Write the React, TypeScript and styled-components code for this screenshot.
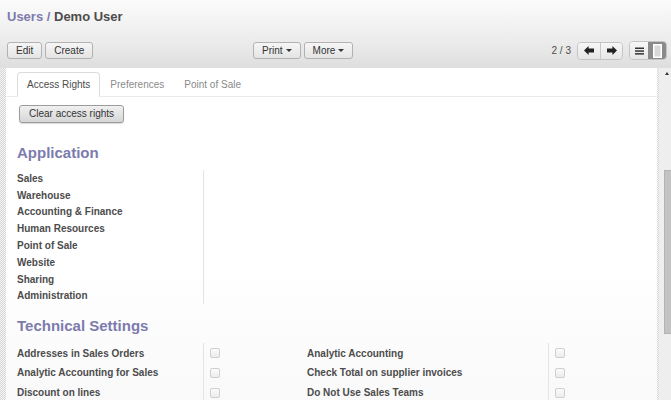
import React from "react";
import styled, { createGlobalStyle } from "styled-components";

const Global = createGlobalStyle`
  html, body { margin: 0; padding: 0; }
  body {
    width: 671px;
    height: 400px;
    overflow: hidden;
    background: #ffffff;
    font-family: "Liberation Sans", Arial, sans-serif;
  }
`;

const Page = styled.div`
  width: 671px;
  height: 400px;
  display: flex;
  flex-direction: column;
  overflow: hidden;
`;

const Header = styled.header`
  height: 68px;
  box-sizing: border-box;
  padding: 9px 4px 0 7px;
  background: linear-gradient(to bottom, #fbfbfb 0%, #ececec 60%, #dedede 100%);
  flex-shrink: 0;
`;

const Title = styled.h1`
  margin: 0;
  font-size: 13px;
  line-height: 16px;
  font-weight: bold;
  color: #4c4c4c;
`;

const Crumb = styled.span`
  color: #7c7bad;
`;

const Toolbar = styled.div`
  margin-top: 16px;
  display: grid;
  grid-template-columns: 246px 1fr auto;
  align-items: center;
`;

const Group = styled.div`
  display: flex;
  gap: 3px;
  align-items: center;
`;

const Btn = styled.button`
  height: 17px;
  box-sizing: border-box;
  padding: 0 8px;
  border: 1px solid #b2b2b2;
  border-radius: 3px;
  background: linear-gradient(to bottom, #f6f6f6, #e4e4e4);
  font-family: "Liberation Sans", Arial, sans-serif;
  font-size: 10px;
  line-height: 15px;
  color: #333;
  display: flex;
  align-items: center;
  gap: 3px;
  cursor: pointer;
`;

const Caret = styled.span`
  width: 0;
  height: 0;
  border-left: 3px solid transparent;
  border-right: 3px solid transparent;
  border-top: 3px solid #333;
`;

const Right = styled.div`
  display: flex;
  align-items: center;
`;

const PagerText = styled.span`
  font-size: 10px;
  color: #4c4c4c;
  margin-right: 6px;
`;

const BtnGroup = styled.div<{ $gap?: number; $h: number }>`
  display: flex;
  border: 1px solid #c4c4c4;
  border-radius: 4px;
  overflow: hidden;
  height: ${(p) => p.$h}px;
  box-sizing: border-box;
  margin-right: ${(p) => p.$gap ?? 0}px;
`;

const GroupBtn = styled.div<{ $w: number; $active?: boolean; $divider?: boolean }>`
  width: ${(p) => p.$w}px;
  display: flex;
  align-items: center;
  justify-content: center;
  background: ${(p) =>
    p.$active ? "#8a8a8a" : "linear-gradient(to bottom, #f7f7f7, #e6e6e6)"};
  border-left: ${(p) => (p.$divider ? "1px solid #c8c8c8" : "none")};
`;

const Body = styled.div`
  flex: 1;
  display: flex;
  min-height: 0;
`;

const Hatch = styled.div<{ $w: number }>`
  width: ${(p) => p.$w}px;
  flex-shrink: 0;
  background: repeating-conic-gradient(#d6d6d6 0 25%, #f5f5f5 0 50%) 0 0 / 2px 2px;
`;

const Sheet = styled.div`
  flex: 1;
  min-width: 0;
  box-sizing: border-box;
  padding: 0 0 0 11px;
  background: linear-gradient(to bottom, #ffffff 0%, #ffffff 60%, #f9f9f9 100%);
`;

const Tabs = styled.div`
  margin-top: 4px;
  margin-left: -11px;
  padding-left: 11px;
  display: flex;
  border-bottom: 1px solid #ebebeb;
  height: 24px;
`;

const Tab = styled.div<{ $active?: boolean }>`
  box-sizing: border-box;
  height: 25px;
  padding: 4px 9px 0 9px;
  font-size: 10px;
  line-height: 15px;
  color: ${(p) => (p.$active ? "#4c4c4c" : "#8a8a8a")};
  border: 1px solid ${(p) => (p.$active ? "#dcdcdc" : "transparent")};
  border-bottom-color: ${(p) => (p.$active ? "#ffffff" : "transparent")};
  border-radius: 4px 4px 0 0;
  background: ${(p) => (p.$active ? "#ffffff" : "transparent")};
`;

const ClearBtn = styled.button`
  margin: 8px 0 0 2px;
  height: 18px;
  box-sizing: border-box;
  padding: 0 9px;
  border: 1px solid #9c9c9c;
  border-radius: 3px;
  background: linear-gradient(to bottom, #f0f0f0, #d6d6d6);
  box-shadow: 0 1px 1px rgba(0, 0, 0, 0.15);
  font-family: "Liberation Sans", Arial, sans-serif;
  font-size: 10px;
  line-height: 16px;
  color: #333;
  display: block;
`;

const Heading = styled.h2<{ $top: number }>`
  margin: ${(p) => p.$top}px 0 8px 0;
  font-size: 15px;
  line-height: 18px;
  font-weight: bold;
  color: #7c7bad;
`;

const Grid = styled.div<{ $cols: string; $row: number }>`
  display: grid;
  grid-template-columns: ${(p) => p.$cols};
  grid-auto-rows: ${(p) => p.$row}px;
  width: 629px;
`;

const Label = styled.div`
  font-size: 10px;
  font-weight: bold;
  color: #4c4c4c;
  display: flex;
  align-items: center;
  white-space: nowrap;
`;

const Field = styled.div`
  border-left: 1px solid #e4e4e4;
  display: flex;
  align-items: center;
  padding-left: 6px;
`;

const Check = styled.span`
  width: 10px;
  height: 10px;
  box-sizing: border-box;
  border: 1px solid #cfcfcf;
  border-radius: 2px;
  background: linear-gradient(to bottom, #fbfbfb, #ececec);
`;

const Scroll = styled.div`
  width: 14px;
  flex-shrink: 0;
  display: flex;
`;

const Track = styled.div`
  flex: 1;
  background: #eeeeee;
  display: flex;
  flex-direction: column;
  align-items: flex-start;
`;

const UpArrow = styled.span`
  margin: 4px 0 0 6px;
  width: 0;
  height: 0;
  border-left: 2.5px solid transparent;
  border-right: 2.5px solid transparent;
  border-bottom: 3px solid #333;
`;

const Thumb = styled.div`
  margin: 95px 0 0 5px;
  width: 7px;
  height: 164px;
  background: #c3c3c3;
  border: 1px solid #b4b4b4;
  border-right: none;
  box-sizing: border-box;
`;

const apps = [
  "Sales",
  "Warehouse",
  "Accounting & Finance",
  "Human Resources",
  "Point of Sale",
  "Website",
  "Sharing",
  "Administration",
];

const tech: [string, string][] = [
  ["Addresses in Sales Orders", "Analytic Accounting"],
  ["Analytic Accounting for Sales", "Check Total on supplier invoices"],
  ["Discount on lines", "Do Not Use Sales Teams"],
];

const ArrowLeft = () => (
  <svg width="10" height="9" viewBox="0 0 10 9">
    <path d="M0 4.5 L4.6 0 L4.6 2.4 L10 2.4 L10 6.6 L4.6 6.6 L4.6 9 Z" fill="#222" />
  </svg>
);

const ArrowRight = () => (
  <svg width="10" height="9" viewBox="0 0 10 9">
    <path d="M10 4.5 L5.4 0 L5.4 2.4 L0 2.4 L0 6.6 L5.4 6.6 L5.4 9 Z" fill="#222" />
  </svg>
);

const ListIcon = () => (
  <svg width="9" height="8" viewBox="0 0 9 8">
    <rect x="0" y="0.5" width="9" height="1.5" fill="#333" />
    <rect x="0" y="3.3" width="9" height="1.5" fill="#333" />
    <rect x="0" y="6.1" width="9" height="1.5" fill="#333" />
  </svg>
);

const FormIcon = () => (
  <svg width="9" height="14" viewBox="0 0 9 14">
    <rect x="0.75" y="0.75" width="7.5" height="12.5" fill="#d8d8d8" stroke="#ffffff" strokeWidth="1.5" />
  </svg>
);

export default function App() {
  return (
    <>
      <Global />
      <Page>
        <Header>
          <Title>
            <Crumb>Users /</Crumb> Demo User
          </Title>
          <Toolbar>
            <Group>
              <Btn>Edit</Btn>
              <Btn>Create</Btn>
            </Group>
            <Group>
              <Btn>
                Print
                <Caret />
              </Btn>
              <Btn>
                More
                <Caret />
              </Btn>
            </Group>
            <Right>
              <PagerText>2 / 3</PagerText>
              <BtnGroup $gap={6} $h={18}>
                <GroupBtn $w={22}>
                  <ArrowLeft />
                </GroupBtn>
                <GroupBtn $w={21} $divider>
                  <ArrowRight />
                </GroupBtn>
              </BtnGroup>
              <BtnGroup $h={19}>
                <GroupBtn $w={18}>
                  <ListIcon />
                </GroupBtn>
                <GroupBtn $w={18} $active>
                  <FormIcon />
                </GroupBtn>
              </BtnGroup>
            </Right>
          </Toolbar>
        </Header>
        <Body>
          <Hatch $w={6} />
          <Sheet>
            <Tabs>
              <Tab $active>Access Rights</Tab>
              <Tab>Preferences</Tab>
              <Tab>Point of Sale</Tab>
            </Tabs>
            <ClearBtn>Clear access rights</ClearBtn>
            <Heading $top={21}>Application</Heading>
            <Grid $cols="186px 1fr" $row={16.8}>
              {apps.map((a) => (
                <React.Fragment key={a}>
                  <Label>{a}</Label>
                  <Field />
                </React.Fragment>
              ))}
            </Grid>
            <Heading $top={13}>Technical Settings</Heading>
            <Grid $cols="186px 104px 241px 1fr" $row={19.7}>
              {tech.map(([l, r]) => (
                <React.Fragment key={l}>
                  <Label>{l}</Label>
                  <Field>
                    <Check />
                  </Field>
                  <Label>{r}</Label>
                  <Field>
                    <Check />
                  </Field>
                </React.Fragment>
              ))}
            </Grid>
          </Sheet>
          <Scroll>
            <Hatch $w={2} />
            <Track>
              <UpArrow />
              <Thumb />
            </Track>
          </Scroll>
        </Body>
      </Page>
    </>
  );
}
